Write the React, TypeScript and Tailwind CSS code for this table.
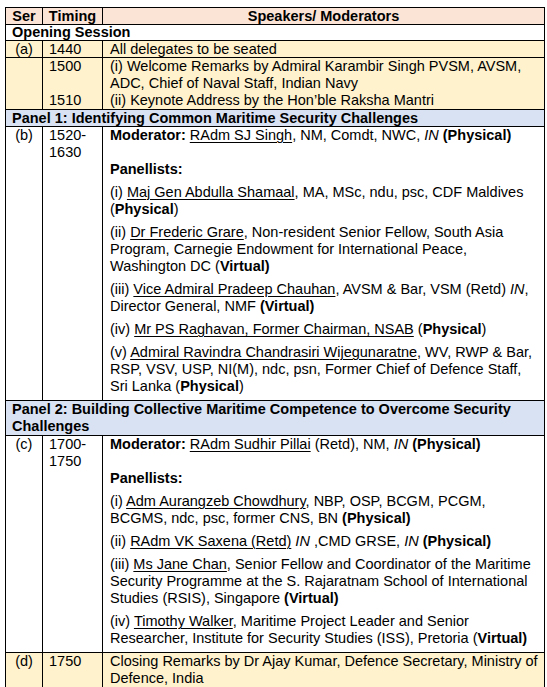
import React from 'react';

const cell = 'border border-black align-top';

function Name({ children }: { children: React.ReactNode }) {
  return <span className="underline decoration-1 underline-offset-[2px]">{children}</span>;
}

export default function App() {
  return (
    <div className="min-h-screen bg-white pl-[5px] pt-[7px] text-black" style={{ fontFamily: '"Liberation Sans", Arial, sans-serif' }}>
      <table className="w-[540px] table-fixed border-collapse text-[14.5px] leading-[17px]">
        <colgroup>
          <col className="w-[37px]" />
          <col className="w-[60px]" />
          <col />
        </colgroup>
        <tbody>
          {/* header */}
          <tr className="bg-[#fbe4d5] font-bold leading-[16px]">
            <td className={`${cell} text-center`}>Ser</td>
            <td className={`${cell} text-center`}>Timing</td>
            <td className={`${cell} text-center`}>Speakers/ Moderators</td>
          </tr>
          <tr className="leading-[15px]">
            <td colSpan={3} className={`${cell} pl-[6px] font-bold`}>Opening Session</td>
          </tr>
          <tr className="bg-[#fff2cc] leading-[16px]">
            <td className={`${cell} text-center`}>(a)</td>
            <td className={`${cell} pl-[6px]`}>1440</td>
            <td className={`${cell} pl-[7px] pr-[5px]`}>All delegates to be seated</td>
          </tr>
          <tr className="bg-[#fff2cc]">
            <td className={cell}></td>
            <td className={`${cell} pl-[6px]`}>
              1500
              <br />
              &nbsp;
              <br />
              1510
            </td>
            <td className={`${cell} pl-[7px] pr-[5px]`}>
              <p>(i) Welcome Remarks by Admiral Karambir Singh PVSM, AVSM, ADC, Chief of Naval Staff, Indian Navy</p>
              <p>(ii) Keynote Address by the Hon’ble Raksha Mantri</p>
            </td>
          </tr>

          {/* panel 1 */}
          <tr className="bg-[#d9e2f3] leading-[16px]">
            <td colSpan={3} className={`${cell} pl-[6px] font-bold`}>Panel 1: Identifying Common Maritime Security Challenges</td>
          </tr>
          <tr>
            <td className={`${cell} text-center`}>(b)</td>
            <td className={`${cell} pl-[6px]`}>
              1520-
              <br />
              1630
            </td>
            <td className={`${cell} pl-[7px] pr-[5px]`}>
              <p className="mb-[17px]">
                <b>Moderator:</b> <Name>RAdm SJ Singh</Name>, NM, Comdt, NWC, <i>IN</i> <b>(Physical)</b>
              </p>
              <p className="mb-[6px] font-bold">Panellists:</p>
              <p className="mb-[6px]">
                (i) <Name>Maj Gen Abdulla Shamaal</Name>, MA, MSc, ndu, psc, CDF Maldives (<b>Physical</b>)
              </p>
              <p className="mb-[6px]">
                (ii) <Name>Dr Frederic Grare</Name>, Non-resident Senior Fellow, South Asia Program, Carnegie Endowment for International Peace, Washington DC (<b>Virtual)</b>
              </p>
              <p className="mb-[6px]">
                (iii) <Name>Vice Admiral Pradeep Chauhan</Name>, AVSM &amp; Bar, VSM (Retd) <i>IN</i>, Director General, NMF <b>(Virtual)</b>
              </p>
              <p className="mb-[6px]">
                (iv) <Name>Mr PS Raghavan, Former Chairman, NSAB</Name> (<b>Physical</b>)
              </p>
              <p className="mb-[5px]">
                (v) <Name>Admiral Ravindra Chandrasiri Wijegunaratne</Name>, WV, RWP &amp; Bar, RSP, VSV, USP, NI(M), ndc, psn, Former Chief of Defence Staff, Sri Lanka (<b>Physical</b>)
              </p>
            </td>
          </tr>

          {/* panel 2 */}
          <tr className="bg-[#d9e2f3]">
            <td colSpan={3} className={`${cell} pl-[6px] pr-[5px] font-bold`}>
              Panel 2: Building Collective Maritime Competence to Overcome Security Challenges
            </td>
          </tr>
          <tr>
            <td className={`${cell} text-center`}>(c)</td>
            <td className={`${cell} pl-[6px]`}>
              1700-
              <br />
              1750
            </td>
            <td className={`${cell} pl-[7px] pr-[5px]`}>
              <p className="mb-[17px]">
                <b>Moderator:</b> <Name>RAdm Sudhir Pillai</Name> (Retd), NM, <i>IN</i> <b>(Physical)</b>
              </p>
              <p className="mb-[6px] font-bold">Panellists:</p>
              <p className="mb-[6px]">
                (i) <Name>Adm Aurangzeb Chowdhury</Name>, NBP, OSP, BCGM, PCGM, BCGMS, ndc, psc, former CNS, BN <b>(Physical)</b>
              </p>
              <p className="mb-[6px]">
                (ii) <Name>RAdm VK Saxena (Retd)</Name> <i>IN</i> ,CMD GRSE, <i>IN</i> <b>(Physical)</b>
              </p>
              <p className="mb-[6px]">
                (iii) <Name>Ms Jane Chan</Name>, Senior Fellow and Coordinator of the Maritime Security Programme at the S. Rajaratnam School of International Studies (RSIS), Singapore <b>(Virtual)</b>
              </p>
              <p className="mb-[5px]">
                (iv) <Name>Timothy Walker</Name>, Maritime Project Leader and Senior Researcher, Institute for Security Studies (ISS), Pretoria (<b>Virtual)</b>
              </p>
            </td>
          </tr>
          <tr className="bg-[#fff2cc]">
            <td className={`${cell} text-center`}>(d)</td>
            <td className={`${cell} pl-[6px]`}>1750</td>
            <td className={`${cell} pl-[7px] pr-[5px]`}>
              Closing Remarks by Dr Ajay Kumar, Defence Secretary, Ministry of Defence, India
            </td>
          </tr>
        </tbody>
      </table>
    </div>
  );
}
